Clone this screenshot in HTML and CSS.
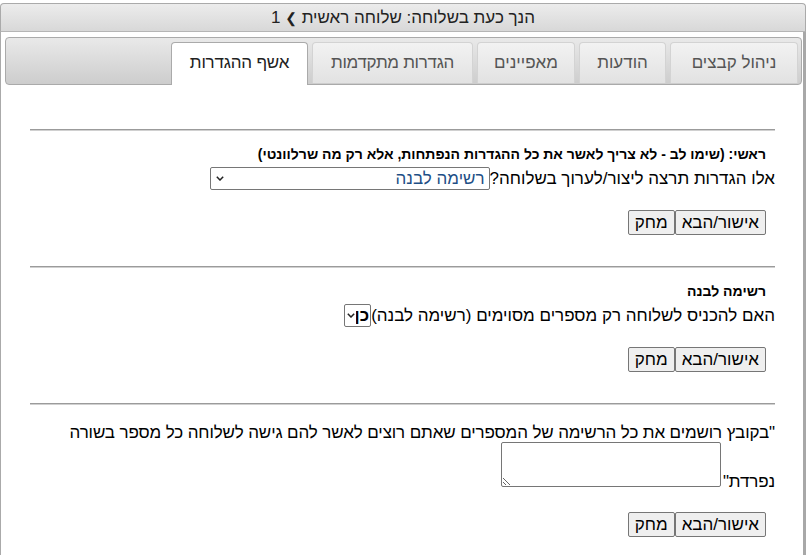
FILE: index.html
```html
<!DOCTYPE html>
<html lang="he" dir="rtl">
<head>
<meta charset="utf-8">
<title>אשף ההגדרות</title>
<link rel="stylesheet" href="styles.css">
</head>
<body>
<div class="dialog">
  <div class="titlebar">הנך כעת בשלוחה: שלוחה ראשית <span class="chev">❯</span> 1</div>
  <div class="content">
    <ul class="tabnav">
      <li class="tab tab-files">ניהול קבצים</li>
      <li class="tab tab-msgs">הודעות</li>
      <li class="tab tab-props">מאפיינים</li>
      <li class="tab tab-adv">הגדרות מתקדמות</li>
      <li class="tab tab-wizard active">אשף ההגדרות</li>
    </ul>
    <div class="panel">
      <hr class="sep">
      <form class="section">
        <div class="label">ראשי: (שימו לב - לא צריך לאשר את כל ההגדרות הנפתחות, אלא רק מה שרלוונטי)</div>
        <div class="row"><span>אלו הגדרות תרצה ליצור/לערוך בשלוחה?</span><select class="sel sel-wide"><option>רשימה לבנה</option></select></div>
        <div class="buttons"><button type="button" class="btn">אישור/הבא</button><button type="button" class="btn">מחק</button></div>
      </form>
      <hr class="sep">
      <form class="section">
        <div class="label">רשימה לבנה</div>
        <div class="row"><span>האם להכניס לשלוחה רק מספרים מסוימים (רשימה לבנה)</span><select class="sel sel-small"><option>כן</option><option>לא</option></select></div>
        <div class="buttons"><button type="button" class="btn">אישור/הבא</button><button type="button" class="btn">מחק</button></div>
      </form>
      <hr class="sep">
      <form class="section section-last">
        <div class="para">"בקובץ רושמים את כל הרשימה של המספרים שאתם רוצים לאשר להם גישה לשלוחה כל מספר בשורה נפרדת"<textarea class="area"></textarea></div>
        <div class="buttons"><button type="button" class="btn">אישור/הבא</button><button type="button" class="btn">מחק</button></div>
      </form>
    </div>
  </div>
</div>
</body>
</html>
```

FILE: styles.css
```css
html, body {
  margin: 0;
  padding: 0;
  background: #ffffff;
}
body {
  font-family: "Liberation Sans", Arial, sans-serif;
  font-size: 17px;
  color: #000;
  direction: rtl;
}
.dialog {
  width: 806px;
  margin: 3px auto 0 0;
}
.titlebar {
  height: 27px;
  border: 1px solid #aaaaaa;
  border-bottom-color: #b5b5b5;
  border-radius: 4px 4px 0 0;
  background: linear-gradient(#ececec, #d8d8d8);
  text-align: center;
  font-size: 17px;
  line-height: 28px;
  color: #222222;
}
.chev {
  font-family: "DejaVu Sans", sans-serif;
  font-size: 14px;
  font-weight: bold;
}
.content {
  border-left: 1px solid #aaaaaa;
  border-right: 3px solid #a8a8a8;
  padding: 5px 1px 0 4px;
  min-height: 523px;
  box-sizing: border-box;
}
.tabnav {
  list-style: none;
  margin: 0;
  padding: 4px 3px 0 0;
  height: 42px;
  border: 1px solid #aaaaaa;
  border-radius: 4px;
  background: linear-gradient(#e9e9e9, #cdcdcd);
  display: flex;
  gap: 4px;
  align-items: flex-start;
}
.tab {
  height: 41px;
  padding: 0;
  box-sizing: border-box;
  border: 1px solid #d3d3d3;
  border-bottom: 0;
  border-radius: 4px 4px 0 0;
  background: linear-gradient(#f2f2f2, #e2e2e2);
  font-size: 17px;
  line-height: 40px;
  text-align: center;
  color: #555555;
  white-space: nowrap;
}
.tab-files { width: 128px; }
.tab-msgs { width: 87px; }
.tab-props { width: 98px; }
.tab-adv { width: 161px; letter-spacing: -0.3px; }
.tab-wizard { width: 137px; letter-spacing: -0.2px; }
.tab.active {
  background: #ffffff;
  border-color: #aaaaaa;
  color: #212121;
  height: 43px;
}
.panel {
  padding: 44px 27px 0 25px;
}
.sep {
  margin: 0;
  border: 0;
  border-top: 1px solid #9b9b9b;
  border-bottom: 1px solid #d0d0d0;
}
.section {
  padding: 15px 0 31px 0;
  margin: 0;
}
.label {
  font-weight: bold;
  font-size: 14px;
  line-height: 17px;
  padding-right: 9px;
}
.row {
  margin-top: 4px;
  height: 23px;
  display: flex;
  align-items: center;
}
.sel {
  font-family: "Liberation Sans", Arial, sans-serif;
  font-size: 17px;
  height: 23px;
  margin: 0;
  padding: 0 4px 0 20px;
  border: 1px solid #767676;
  border-radius: 2px;
  appearance: none;
  -webkit-appearance: none;
  background-color: #ffffff;
  background-image: url("data:image/svg+xml;utf8,<svg xmlns='http://www.w3.org/2000/svg' width='8' height='5' viewBox='0 0 8 5'><path d='M0.8 0.8 L4 4 L7.2 0.8' fill='none' stroke='%23222' stroke-width='1.5'/></svg>");
  background-repeat: no-repeat;
  background-position: left 5px center;
  color: #000;
}
.sel-wide {
  width: 280px;
  color: #1e4f86;
}
.sel-small {
  width: 27px;
  font-weight: bold;
  padding: 0 1px 0 11px;
  background-position: left 2px center;
}
.buttons {
  margin-top: 20px;
  display: flex;
  padding-right: 9px;
}
.btn {
  font-family: "Liberation Sans", Arial, sans-serif;
  font-size: 17px;
  height: 25px;
  padding: 0 6px;
  margin: 0;
  border: 1px solid #767676;
  border-radius: 2px;
  background: #efefef;
  color: #000;
}
.section-last {
  padding-top: 18px;
  padding-bottom: 0;
}
.para {
  line-height: 19px;
  letter-spacing: -0.12px;
}
.area {
  width: 220px;
  height: 45px;
  box-sizing: border-box;
  border: 1px solid #767676;
  border-radius: 2px;
  margin: 0 2px 0 0;
  padding: 2px;
  resize: both;
}
.section-last .buttons {
  margin-top: 21px;
}
```
